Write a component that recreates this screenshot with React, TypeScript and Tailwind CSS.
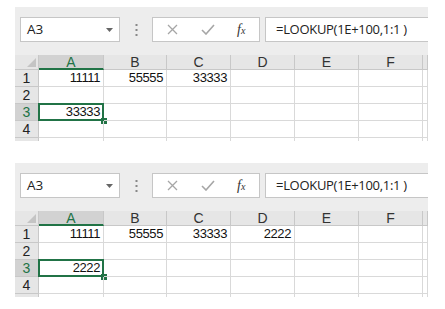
import React from 'react';

type Row = (string | null)[];

interface SheetProps {
  rows: Row[];
}

const COLS = ['A', 'B', 'C', 'D', 'E', 'F', ''];
const font = { fontFamily: '"Liberation Sans", Arial, sans-serif' };

const Toolbar: React.FC = () => (
  <div className="h-[48px] flex items-start pt-[10px] pl-[5px] shrink-0">
    <div className="w-[100px] h-[25px] bg-white border border-[#c6c6c6] flex items-center justify-between pl-[6px] pr-[6px]">
      <span className="text-[13.5px] text-[#222]" style={{ fontFamily: '"Open Sans", "Liberation Sans", sans-serif' }}>A3</span>
      <svg width="7" height="4" viewBox="0 0 7 4">
        <polygon points="0,0 7,0 3.5,4" fill="#666" />
      </svg>
    </div>
    <div className="w-[32px] h-[25px] flex items-center justify-center">
      <svg width="3" height="12" viewBox="0 0 3 12">
        <rect x="0.5" y="0" width="2" height="2" fill="#888" />
        <rect x="0.5" y="5" width="2" height="2" fill="#888" />
        <rect x="0.5" y="10" width="2" height="2" fill="#888" />
      </svg>
    </div>
    <div className="w-[108px] h-[25px] bg-white border border-[#c6c6c6] flex items-center pl-[14px]">
      <svg width="11" height="11" viewBox="0 0 11 11" className="shrink-0">
        <path d="M1 1 L10 10 M10 1 L1 10" stroke="#a6a6a6" strokeWidth="1.3" />
      </svg>
      <svg width="14" height="11" viewBox="0 0 14 11" className="ml-[23px] shrink-0">
        <path d="M1 6 L5 10 L13 1" stroke="#a6a6a6" strokeWidth="1.6" fill="none" />
      </svg>
      <span className="ml-[22px] italic text-[14px] text-[#333] leading-none" style={{ fontFamily: '"Liberation Serif", serif' }}>
        f<span className="text-[10px]">x</span>
      </span>
    </div>
    <div className="flex-1 ml-[5px] h-[25px] bg-white border border-r-0 border-[#c6c6c6] flex items-center pl-[10px]">
      <span className="text-[13px] text-[#222]" style={{ fontFamily: '"Open Sans", "Liberation Sans", sans-serif', letterSpacing: '-0.3px' }}>
        =LOOKUP(1E+100,1:1 )
      </span>
    </div>
  </div>
);

const Sheet: React.FC<SheetProps> = ({ rows }) => {
  return (
    <div className="w-[413px] h-[134px] bg-[#ededed] overflow-hidden flex flex-col" style={font}>
      <Toolbar />
      <div className="grid grid-cols-[24px_65px_63px_64px_64px_64px_64px_1fr] grid-rows-[15px_repeat(5,17px)] bg-white">
        {/* header row */}
        <div className="bg-[#e6e6e6] border-r border-b border-[#c8c8c8] flex items-end justify-end p-[2px]">
          <svg width="9" height="9" viewBox="0 0 9 9">
            <polygon points="9,0 9,9 0,9" fill="#c4c4c4" />
          </svg>
        </div>
        {COLS.map((c, i) => (
          <div
            key={`h${i}`}
            className={
              i === 0
                ? 'bg-[#d2d2d2] border-r border-[#c8c8c8] border-b-2 border-b-[#217346] text-[#217346] text-[14px] leading-none flex items-center justify-center'
                : 'bg-[#e6e6e6] border-r border-b border-[#c8c8c8] text-[#333] text-[14px] leading-none flex items-center justify-center'
            }
          >
            {c}
          </div>
        ))}
        {[0, 1, 2, 3, 4].map((r) => (
          <React.Fragment key={r}>
            <div
              className={
                r === 2
                  ? 'bg-[#d2d2d2] border-r border-b border-[#c8c8c8] text-[#217346] text-[14px] flex items-center justify-center'
                  : 'bg-[#e6e6e6] border-r border-b border-[#c8c8c8] text-[#222] text-[14px] flex items-center justify-center'
              }
            >
              {r + 1}
            </div>
            {COLS.map((_, ci) => {
              const val = rows[r]?.[ci] ?? null;
              const selected = r === 2 && ci === 0;
              return (
                <div
                  key={ci}
                  className="relative border-r border-b border-[#d9d9d9] text-[13px] text-[#111] flex items-center justify-end pr-[3px]"
                  style={{ letterSpacing: '-0.4px' }}
                >
                  {val}
                  {selected && (
                    <>
                      <div className="absolute -left-px -top-px -right-px -bottom-px border-2 border-[#217346]" />
                      <div className="absolute right-[-4px] bottom-[-4px] w-[6px] h-[6px] bg-[#217346]" />
                    </>
                  )}
                </div>
              );
            })}
          </React.Fragment>
        ))}
      </div>
    </div>
  );
};

export default function App() {
  return (
    <div className="w-[445px] h-[309px] bg-white pt-[7px] pl-[15px] flex flex-col gap-[22px]">
      <Sheet rows={[['11111', '55555', '33333'], [], ['33333']]} />
      <Sheet rows={[['11111', '55555', '33333', '2222'], [], ['2222']]} />
    </div>
  );
}
